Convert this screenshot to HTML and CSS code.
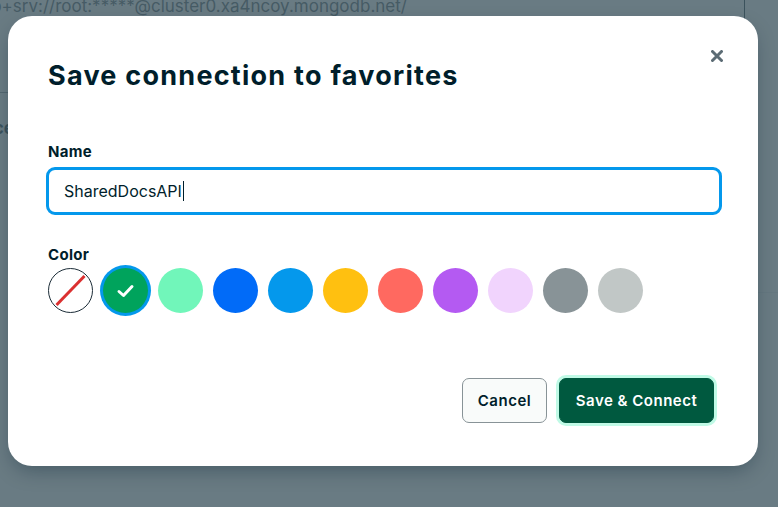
FILE: index.html
```html
<!DOCTYPE html>
<html>
<head>
<meta charset="utf-8">
<link rel="stylesheet" href="styles.css">
</head>
<body>
<div class="page">
  <div class="conn-string">mongodb+srv://root:*****@cluster0.xa4ncoy.mongodb.net/</div>
  <div class="page-rule"></div>
  <div class="page-label">Advanced</div>
  <div class="vrule"></div>
  <div class="hrule-right"></div>
</div>
<div class="overlay"></div>
<div class="modal">
  <button class="close" aria-label="Close">
    <svg width="12" height="12" viewBox="0 0 12 12"><path d="M1.5 1.5 L10.5 10.5 M10.5 1.5 L1.5 10.5" stroke="#5c6c75" stroke-width="3" stroke-linecap="round"/></svg>
  </button>
  <h1 class="title">Save connection to favorites</h1>
  <label class="label">Name</label>
  <div class="input"><span class="value">SharedDocsAPI</span><span class="caret"></span></div>
  <label class="label label-color">Color</label>
  <div class="swatches">
    <div class="swatch none">
      <svg width="45" height="45" viewBox="0 0 45 45"><circle cx="22.5" cy="22.5" r="22" fill="#fff" stroke="#1c2d38" stroke-width="1"/><line x1="8.5" y1="37" x2="36.5" y2="8" stroke="#db3030" stroke-width="3"/></svg>
    </div>
    <div class="swatch selected" style="background:#00a35c">
      <svg width="20" height="16" viewBox="0 0 20 16"><path d="M3 8.5 L7.5 12.5 L16 3.5" fill="none" stroke="#fff" stroke-width="3" stroke-linecap="round" stroke-linejoin="round"/></svg>
    </div>
    <div class="swatch" style="background:#71f6ba"></div>
    <div class="swatch" style="background:#016bf8"></div>
    <div class="swatch" style="background:#0498ec"></div>
    <div class="swatch" style="background:#ffc010"></div>
    <div class="swatch" style="background:#ff6960"></div>
    <div class="swatch" style="background:#b45af2"></div>
    <div class="swatch" style="background:#f1d4fd"></div>
    <div class="swatch" style="background:#889397"></div>
    <div class="swatch" style="background:#c1c7c6"></div>
  </div>
  <div class="footer">
    <button class="btn btn-cancel">Cancel</button>
    <button class="btn btn-primary">Save &amp; Connect</button>
  </div>
</div>
</body>
</html>
```
FILE: styles.css
```css
html, body {
  margin: 0;
  padding: 0;
  width: 778px;
  height: 507px;
  overflow: hidden;
}
body {
  position: relative;
  background: #fff;
  font-family: "Inter", "Noto Sans", sans-serif;
  color: #001e2b;
}
.page {
  position: absolute;
  inset: 0;
}
.conn-string {
  position: absolute;
  left: -75px;
  top: -4px;
  font-size: 17px;
  color: #3d4f58;
  white-space: nowrap;
}
.page-rule {
  position: absolute;
  left: 0;
  top: 92px;
  width: 40px;
  height: 1px;
  background: #889397;
}
.page-label {
  position: absolute;
  left: -60px;
  top: 118px;
  font-size: 17px;
  font-weight: 700;
  color: #001e2b;
}
.vrule {
  position: absolute;
  left: 744px;
  top: 0;
  width: 1px;
  height: 40px;
  background: #001e2b;
}
.hrule-right {
  position: absolute;
  left: 740px;
  top: 292px;
  width: 40px;
  height: 1px;
  background: #e8edeb;
}
.overlay {
  position: absolute;
  inset: 0;
  background: rgba(72, 94, 104, 0.82);
}
.modal {
  position: absolute;
  left: 8px;
  top: 16px;
  width: 750px;
  height: 450px;
  box-sizing: border-box;
  background: #fff;
  border-radius: 24px;
  padding: 40px 40px 0 40px;
  box-shadow: 0 8px 20px -4px rgba(0, 30, 43, 0.35);
}
.close {
  position: absolute;
  right: 29px;
  top: 28px;
  width: 24px;
  height: 24px;
  padding: 0;
  border: 0;
  background: transparent;
  display: flex;
  align-items: center;
  justify-content: center;
}
.title {
  margin: 0;
  font-size: 27px;
  line-height: 40px;
  font-weight: 700;
  color: #001e2b;
  letter-spacing: 1.25px;
}
.label {
  display: block;
  margin-top: 46px;
  font-size: 15px;
  line-height: 20px;
  font-weight: 700;
  color: #001e2b;
  letter-spacing: 0.3px;
}
.label-color {
  margin-top: 30px;
}
.input {
  margin: 5px 0 0 -2px;
  width: 676px;
  height: 48px;
  box-sizing: border-box;
  border: 3px solid #0498ec;
  border-radius: 9px;
  display: flex;
  align-items: center;
  padding-left: 15px;
  font-size: 16px;
  color: #001e2b;
}
.caret {
  width: 1px;
  height: 20px;
  background: #001e2b;
  margin-left: 1px;
}
.swatches {
  display: flex;
  gap: 10px;
  margin-top: 3px;
}
.swatch {
  width: 45px;
  height: 45px;
  border-radius: 50%;
  display: flex;
  align-items: center;
  justify-content: center;
  flex: none;
}
.swatch.selected {
  box-shadow: 0 0 0 3px #0498ec;
}
.footer {
  display: flex;
  justify-content: flex-end;
  gap: 12px;
  margin-top: 65px;
  padding-right: 4px;
}
.btn {
  height: 45px;
  box-sizing: border-box;
  border-radius: 7px;
  font-family: inherit;
  font-size: 15px;
  font-weight: 600;
  letter-spacing: 0.5px;
  padding: 0 8px;
}
.btn-cancel {
  width: 85px;
  background: #f9fbfa;
  border: 1px solid #889397;
  color: #001e2b;
}
.btn-primary {
  width: 155px;
  background: #00593f;
  border: 1px solid #00593f;
  color: #fff;
  box-shadow: 0 0 0 3px #c0fae6;
}
```
